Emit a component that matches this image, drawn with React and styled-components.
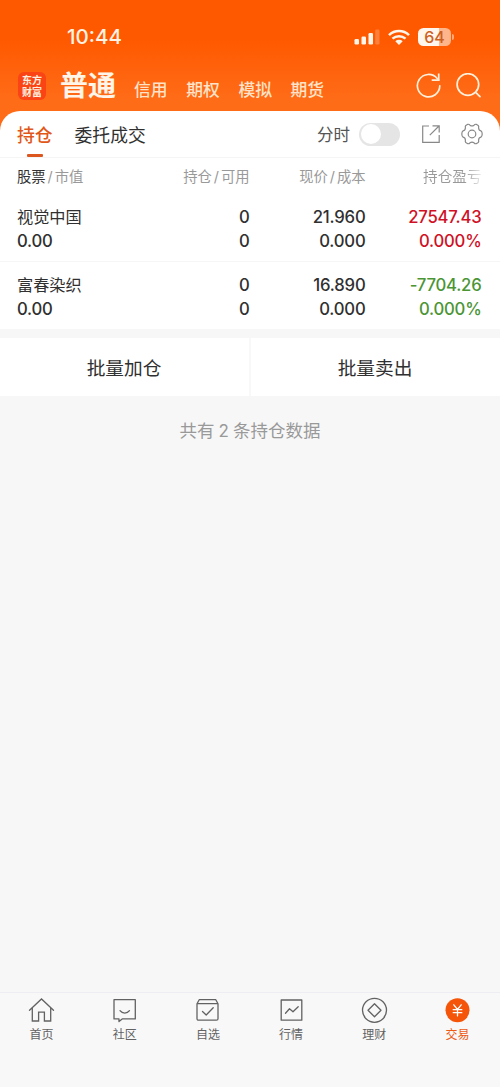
import React from "react";
import styled, { createGlobalStyle } from "styled-components";

const GlobalStyle = createGlobalStyle`
  *, *::before, *::after { box-sizing: border-box; }
  body {
    margin: 0;
    background: #f7f7f7;
    font-family: Inter, "Noto Sans CJK SC", sans-serif;
    color: #303030;
    -webkit-font-smoothing: antialiased;
  }
`;

const Screen = styled.div`
  width: 500px;
  height: 1087px;
  display: flex;
  flex-direction: column;
  background: #f7f7f7;
  overflow: hidden;
  white-space: nowrap;
`;

const Header = styled.header`
  height: 135px;
  margin-bottom: -24px;
  flex: none;
  background: linear-gradient(#ff5900 0, #ff5900 40px, #ff6c18 100px, #ff6c18 100%);
  color: #fff;
`;

const StatusBar = styled.div`
  height: 60px;
  padding: 14px 46px 0 67px;
  display: flex;
  align-items: center;
  justify-content: space-between;
`;

const Clock = styled.span`
  font-size: 20.5px;
  line-height: 24px;
  font-weight: 500;
  color: #fff3e4;
`;

const StatusIcons = styled.div`
  display: flex;
  align-items: center;
  svg { display: block; }
`;

const NavBar = styled.nav`
  height: 51px;
  padding: 0 18px;
  display: flex;
  align-items: center;
`;

const Logo = styled.div`
  width: 28px;
  height: 28px;
  margin-right: 14px;
  border-radius: 6px;
  background: #fa4415;
  display: flex;
  flex-direction: column;
  align-items: center;
  justify-content: center;
  font: 700 10px/12px "Noto Sans CJK SC", sans-serif;
  color: #fff0df;
`;

const ActiveAccount = styled.span`
  font-size: 28px;
  line-height: 40px;
  font-weight: 700;
  color: #fff5e8;
  margin-right: 18px;
`;

const Account = styled.span`
  width: 34px;
  margin: 9px 18.2px 0 0;
  font-size: 16.8px;
  line-height: 24px;
  font-weight: 500;
  color: #ffe3c8;
`;

const NavActions = styled.div`
  margin-left: auto;
  display: flex;
  gap: 14px;
  svg { display: block; }
`;

const Panel = styled.section`
  flex: none;
  background: #fff;
  border-radius: 20px 20px 0 0;
`;

const TabRow = styled.div`
  height: 47px;
  padding: 0 17px;
  display: flex;
  border-bottom: 1px solid #f5f5f5;
`;

const Tab = styled.div`
  display: flex;
  flex-direction: column;
  align-items: center;
  margin-right: 22px;
  padding-top: 12px;
  font-size: 17.8px;
  line-height: 26px;
  font-weight: ${(p) => (p.$active ? 500 : 400)};
  color: ${(p) => (p.$active ? "#e15718" : "#303030")};
  &::after {
    content: "";
    width: 16px;
    height: 3px;
    margin-top: 5px;
    border-radius: 1px;
    background: ${(p) => (p.$active ? "#dc571f" : "transparent")};
  }
`;

const Tools = styled.div`
  margin-left: auto;
  display: flex;
  align-items: center;
  svg { display: block; }
`;

const ToolLabel = styled.span`
  font-size: 16.5px;
  line-height: 24px;
  padding-top: 2px;
  color: #555;
`;

const Toggle = styled.div`
  width: 41px;
  height: 23px;
  margin: 0 21px 0 9px;
  padding: 1.5px;
  border-radius: 12px;
  background: #e5e5e5;
  &::before {
    content: "";
    display: block;
    width: 20px;
    height: 20px;
    border-radius: 50%;
    background: #fff;
  }
`;

const Grid = styled.div`
  display: grid;
  grid-template-columns: 116.5px 116px 116px 116px;
  padding: 0 18px 0 17px;
`;

const Heading = styled(Grid)`
  height: 36px;
  font-size: 14.3px;
  line-height: 37px;
  color: #999;
`;

const HeadCell = styled.span`
  text-align: ${(p) => (p.$left ? "left" : "right")};
  b { font-weight: 400; color: #333; }
  i { font-style: normal; margin: 0 2px; }
`;

const FadedText = styled.span`
  font-size: 14.6px;
  background: linear-gradient(90deg, #999 70%, #e8e8e8 98%);
  background-clip: text;
  color: transparent;
`;

const Row = styled(Grid)`
  height: ${(p) => (p.$last ? 67 : 68)}px;
  padding-top: 11px;
  font-size: 16.7px;
  letter-spacing: -0.2px;
  line-height: 24px;
  font-weight: 500;
  ${(p) => !p.$last && "border-bottom: 1px solid #f6f6f6;"}
`;

const Cell = styled.div`
  text-align: ${(p) => (p.$left ? "left" : "right")};
  color: ${(p) => p.$color || "#303030"};
  div { height: 24px; }
`;

const StockName = styled.div`
  font-size: 16.2px;
  line-height: 25.5px;
  font-weight: 400;
  letter-spacing: 0;
`;

const Actions = styled.div`
  flex: none;
  height: 58px;
  margin-top: 9px;
  display: flex;
  background: #fff;
`;

const Action = styled.div`
  flex: 1;
  padding-right: 1px;
  text-align: center;
  font-size: 18.7px;
  line-height: 62px;
  & + & { border-left: 2px solid #f8f8f8; }
`;

const Summary = styled.p`
  margin: 22px 0 0;
  text-align: center;
  font-size: 17.5px;
  line-height: 25px;
  color: #999;
  span { margin: 0 4px; font-size: 17px; }
`;

const BottomBar = styled.footer`
  margin-top: auto;
  height: 95px;
  flex: none;
  display: grid;
  grid-template-columns: repeat(6, 1fr);
  padding-right: 1px;
  border-top: 1px solid #ededf3;
  background: #f8f8f9;
`;

const BottomItem = styled.div`
  display: flex;
  flex-direction: column;
  align-items: center;
  padding-top: 4px;
  font-size: 12px;
  line-height: 18px;
  color: ${(p) => (p.$active ? "#ee5a14" : "#626262")};
  svg { display: block; margin-bottom: 2px; }
`;

const stroke = { fill: "none", stroke: "currentColor", strokeWidth: 1.3, strokeLinejoin: "round", strokeLinecap: "round" };

const tabIcons = {
  home: (
    <g {...stroke}>
      <path d="M1.5 13.2 13.5 2l12 11.2M4.3 11v13h6.3v-8.8h5.8V24h6.3V11" strokeLinejoin="miter" />
    </g>
  ),
  chat: (
    <g {...stroke}>
      <path d="M3 2.700h21.300v19.200H11.200L8 24.500v-2.600H3z" />
      <path d="M9 13.700c2.500 3.200 7 3.200 9.500 0" />
    </g>
  ),
  check: (
    <g {...stroke}>
      <path d="M3 6.7h21v15a1.500 1.500 0 0 1-1.500 1.500h-18A1.500 1.500 0 0 1 3 21.700zM3 6.700 5.200 2.700h16.600L24 6.700M8.500 14.500l3.700 3.500 7-7.300" />
    </g>
  ),
  chart: (
    <g {...stroke}>
      <rect x="3.2" y="3" width="20.6" height="20.2" />
      <path d="m7.5 16.2 4-4.5 3.5 3 5.2-5" />
    </g>
  ),
  coin: (
    <g {...stroke}>
      <circle cx="13.5" cy="13.3" r="12" />
      <path d="m13.500 6.800 6.500 6.500-6.500 6.500L7 13.300z" />
    </g>
  ),
  trade: (
    <g fill="none" strokeWidth="1.3" stroke="#fff" strokeLinecap="round">
      <circle cx="13.5" cy="13.2" r="12" fill="#f45509" stroke="none" />
      <path d="m9.800 7.800 3.700 4.600 3.700-4.600M9.200 12.700h8.600M9.200 15.700h8.600M13.500 12.700v6.200" />
    </g>
  ),
};

const SignalIcon = () => (
  <svg width="26" height="18" viewBox="0 0 26 18" fill="#fff5e8">
    <rect x="0.5" y="11" width="4.5" height="5.5" rx="1.2" />
    <rect x="7.5" y="8.5" width="4.5" height="8" rx="1.2" />
    <rect x="14.5" y="5" width="4.5" height="11.5" rx="1.2" />
    <rect x="21.2" y="1.5" width="4.3" height="15" rx="1.2" opacity=".25" />
  </svg>
);

const WifiIcon = styled(({ className }) => (
  <svg className={className} width="22" height="17" viewBox="0 0 22 17">
    <g fill="none" stroke="#fff5e8" strokeWidth="2.5">
      <path d="M1 6.100a14.500 14.500 0 0 1 20 0" />
      <path d="M4.500 9.700a9.500 9.500 0 0 1 13 0" />
    </g>
    <path d="m11 16 3.700-3.700a5.500 5.500 0 0 0-7.400 0z" fill="#fff5e8" />
  </svg>
))`
  margin-left: 8px;
`;

const Battery = styled.div`
  width: 33px;
  height: 18px;
  margin-left: 8px;
  border-radius: 5.5px;
  background: linear-gradient(90deg, #fff7ed 64%, #ffb58a 64%);
  color: #cc6022;
  font-size: 16px;
  line-height: 18.5px;
  font-weight: 500;
  text-align: center;
`;

const BatteryTip = styled.div`
  width: 2px;
  height: 6px;
  margin-left: 1px;
  border-radius: 0 2px 2px 0;
  background: #ffa878;
`;

const RefreshIcon = () => (
  <svg width="26" height="26" viewBox="0 0 26 26" fill="none" stroke="#fff0dc" strokeWidth="1.7">
    <path d="M23.800 12.800A11.200 11.200 0 1 1 21.200 5.500L22.700 7" strokeLinecap="round" />
    <path d="M22.700 .5v6.700h-7" />
  </svg>
);

const SearchIcon = () => (
  <svg width="26" height="26" viewBox="0 0 26 26" fill="none" stroke="#fff0dc" strokeWidth="1.7" strokeLinecap="round">
    <circle cx="11.9" cy="11.5" r="10.800" />
    <path d="m19.700 19.300 4.300 4.400" />
  </svg>
);

const ShareIcon = () => (
  <svg width="20" height="20" viewBox="0 0 20 20" fill="none" stroke="#888" strokeWidth="1.2">
    <path d="M8 2H1.700v16.300h16.500V11M11.500 1.800h6.700v6.700M18 2 8.800 11.200" />
  </svg>
);

const SettingsIcon = styled(({ className }) => (
  <svg className={className} width="22" height="22" viewBox="0 0 22 22" fill="none" stroke="#888" strokeWidth="1.2" strokeLinejoin="round">
    <path d="M6.800 1.300Q8 1 9 2.200Q11 3.700 13 2.200Q14 1 15.200 1.300L17.200 2.500Q18 3.300 17.600 4.700Q17.600 7.200 19.900 7.800Q21.200 8.600 21.200 11T19.900 14.200Q17.600 14.800 17.600 17.300Q18 18.700 17.200 19.500L15.200 20.700Q14 21 13 19.800Q11 18.300 9 19.800Q8 21 6.800 20.700L4.800 19.500Q4 18.700 4.400 17.300Q4.400 14.800 2.100 14.200Q.8 13.400.8 11T2.100 7.800Q4.400 7.200 4.400 4.700Q4 3.300 4.800 2.500Z" />
    <circle cx="11" cy="11" r="3.8" />
  </svg>
))`
  margin-left: 20px;
`;

const holdings = [
  { name: "视觉中国", value: "0.00", held: "0", usable: "0", price: "21.960", cost: "0.000", profit: "27547.43", rate: "0.000%", color: "#cf1126" },
  { name: "富春染织", value: "0.00", held: "0", usable: "0", price: "16.890", cost: "0.000", profit: "-7704.26", rate: "0.000%", color: "#4b9535" },
];

const bottomTabs = [
  ["home", "首页"],
  ["chat", "社区"],
  ["check", "自选"],
  ["chart", "行情"],
  ["coin", "理财"],
  ["trade", "交易"],
];

export default function App() {
  return (
    <Screen>
      <GlobalStyle />
      <Header>
        <StatusBar>
          <Clock>10:44</Clock>
          <StatusIcons>
            <SignalIcon />
            <WifiIcon />
            <Battery>64</Battery>
            <BatteryTip />
          </StatusIcons>
        </StatusBar>
        <NavBar>
          <Logo>
            <span>东方</span>
            <span>财富</span>
          </Logo>
          <ActiveAccount>普通</ActiveAccount>
          {["信用", "期权", "模拟", "期货"].map((name) => (
            <Account key={name}>{name}</Account>
          ))}
          <NavActions>
            <RefreshIcon />
            <SearchIcon />
          </NavActions>
        </NavBar>
      </Header>
      <Panel>
        <TabRow>
          <Tab $active>持仓</Tab>
          <Tab>委托成交</Tab>
          <Tools>
            <ToolLabel>分时</ToolLabel>
            <Toggle />
            <ShareIcon />
            <SettingsIcon />
          </Tools>
        </TabRow>
        <Heading>
          <HeadCell $left><b>股票</b><i>/</i>市值</HeadCell>
          <HeadCell>持仓<i>/</i>可用</HeadCell>
          <HeadCell>现价<i>/</i>成本</HeadCell>
          <HeadCell><FadedText>持仓盈亏</FadedText></HeadCell>
        </Heading>
        {holdings.map((h, i) => (
          <Row key={h.name} $last={i === holdings.length - 1}>
            <Cell $left>
              <StockName>{h.name}</StockName>
              <div>{h.value}</div>
            </Cell>
            <Cell><div>{h.held}</div><div>{h.usable}</div></Cell>
            <Cell><div>{h.price}</div><div>{h.cost}</div></Cell>
            <Cell $color={h.color}><div>{h.profit}</div><div>{h.rate}</div></Cell>
          </Row>
        ))}
      </Panel>
      <Actions>
        <Action>批量加仓</Action>
        <Action>批量卖出</Action>
      </Actions>
      <Summary>共有<span>2</span>条持仓数据</Summary>
      <BottomBar>
        {bottomTabs.map(([icon, label]) => (
          <BottomItem key={icon} $active={icon === "trade"}>
            <svg width="27" height="27" viewBox="0 0 27 27">{tabIcons[icon]}</svg>
            {label}
          </BottomItem>
        ))}
      </BottomBar>
    </Screen>
  );
}
